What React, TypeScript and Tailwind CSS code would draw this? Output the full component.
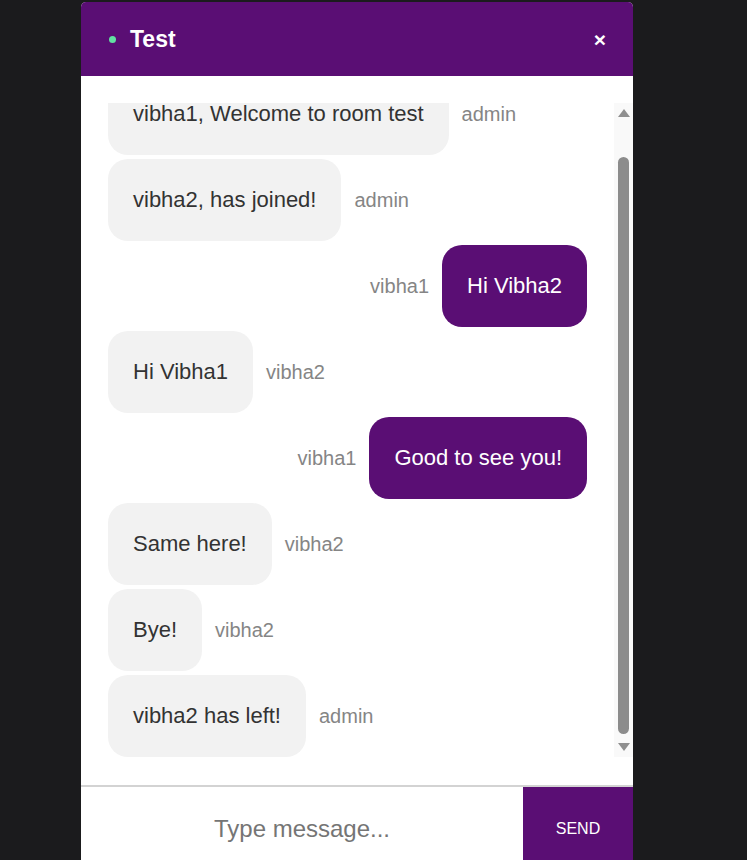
import React from 'react';

type Msg = { text: string; user: string; mine?: boolean };

const messages: Msg[] = [
  { text: 'vibha1, Welcome to room test', user: 'admin' },
  { text: 'vibha2, has joined!', user: 'admin' },
  { text: 'Hi Vibha2', user: 'vibha1', mine: true },
  { text: 'Hi Vibha1', user: 'vibha2' },
  { text: 'Good to see you!', user: 'vibha1', mine: true },
  { text: 'Same here!', user: 'vibha2' },
  { text: 'Bye!', user: 'vibha2' },
  { text: 'vibha2 has left!', user: 'admin' },
];

function Message({ msg }: { msg: Msg }) {
  if (msg.mine) {
    return (
      <div className="flex items-center justify-end gap-[13px] mb-[4px]">
        <span className="text-[20px] text-[#858585]">{msg.user}</span>
        <div className="bg-[#5a0e74] text-white text-[22px] leading-[26px] py-[28px] px-[25px] rounded-[20px]">
          {msg.text}
        </div>
      </div>
    );
  }
  return (
    <div className="flex items-center gap-[13px] mb-[4px]">
      <div className="bg-[#f2f2f2] text-[#333] text-[22px] leading-[26px] py-[28px] px-[25px] rounded-[20px]">
        {msg.text}
      </div>
      <span className="text-[20px] text-[#858585]">{msg.user}</span>
    </div>
  );
}

function Scrollbar() {
  return (
    <div className="w-[19px] bg-[#f9f9f9] flex flex-col items-center">
      <div className="mt-[6px] w-0 h-0 border-l-[6px] border-r-[6px] border-b-[8px] border-l-transparent border-r-transparent border-b-[#8f8f8f]" />
      <div className="mt-[40px] w-[11px] h-[577px] rounded-full bg-[#8c8c8c]" />
      <div className="mt-[9px] w-0 h-0 border-l-[6px] border-r-[6px] border-t-[8px] border-l-transparent border-r-transparent border-t-[#8f8f8f]" />
    </div>
  );
}

export default function App() {
  return (
    <div className="h-screen overflow-hidden bg-[#1b1b1d] pt-[2px] font-[family-name:Liberation_Sans,Arial,sans-serif]">
      <div className="ml-[81px] w-[552px] flex flex-col bg-white rounded-t-[5px] overflow-hidden">
        <div className="h-[74px] bg-[#5a0e74] flex items-center px-[28px] shrink-0">
          <span className="w-[7px] h-[7px] rounded-full bg-[#62e0a2] mr-[14px]" />
          <span className="text-white font-bold text-[23px]">Test</span>
          <span className="ml-auto text-white font-bold text-[21px] leading-none mr-[-1px]">×</span>
        </div>
        <div className="pt-[27px] pb-[28px] shrink-0">
          <div className="h-[654px] flex">
            <div className="flex-1 pl-[27px] pr-[27px] overflow-hidden">
              <div className="-mt-[30px]">
                {messages.map((m, i) => (
                  <Message key={i} msg={m} />
                ))}
              </div>
            </div>
            <Scrollbar />
          </div>
        </div>
        <div className="border-t-2 border-[#d3d3d3] flex h-[86px] shrink-0">
          <div className="flex-1 flex items-center justify-center text-[24px] text-[#757575]">
            Type message...
          </div>
          <button className="w-[110px] bg-[#5a0e74] text-white text-[16px]">SEND</button>
        </div>
      </div>
    </div>
  );
}
